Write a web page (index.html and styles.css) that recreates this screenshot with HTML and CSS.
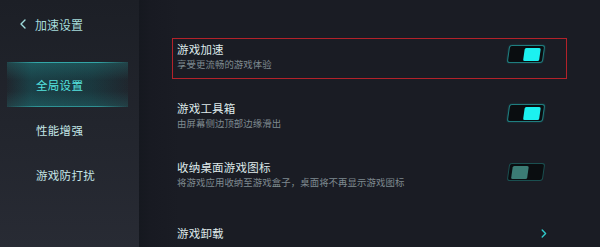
FILE: index.html
```html
<!DOCTYPE html>
<html lang="zh">
<head>
<meta charset="utf-8">
<link rel="stylesheet" href="styles.css">
</head>
<body>
<div class="app">
  <aside class="sidebar">
    <div class="back">
      <svg class="back-icon" width="6" height="10" viewBox="0 0 6 10"><path d="M5 1 L1 5 L5 9" fill="none" stroke="#9fdcdc" stroke-width="1.4" stroke-linecap="round" stroke-linejoin="round"/></svg>
      <span>加速设置</span>
    </div>
    <nav class="nav">
      <div class="nav-item active"><span>全局设置</span></div>
      <div class="nav-item"><span>性能增强</span></div>
      <div class="nav-item"><span>游戏防打扰</span></div>
    </nav>
  </aside>
  <main class="main">
    <div class="row highlighted">
      <div class="texts">
        <div class="title">游戏加速</div>
        <div class="sub">享受更流畅的游戏体验</div>
      </div>
      <div class="toggle on"><div class="knob"></div></div>
    </div>
    <div class="row">
      <div class="texts">
        <div class="title">游戏工具箱</div>
        <div class="sub">由屏幕侧边顶部边缘滑出</div>
      </div>
      <div class="toggle on"><div class="knob"></div></div>
    </div>
    <div class="row">
      <div class="texts">
        <div class="title">收纳桌面游戏图标</div>
        <div class="sub">将游戏应用收纳至游戏盒子，桌面将不再显示游戏图标</div>
      </div>
      <div class="toggle off"><div class="knob"></div></div>
    </div>
    <div class="row link">
      <div class="title">游戏卸载</div>
      <svg class="chev" width="6" height="9" viewBox="0 0 6 9"><path d="M1.2 1 L4.6 4.5 L1.2 8" fill="none" stroke="#2fc9c9" stroke-width="1.4" stroke-linecap="round" stroke-linejoin="round"/></svg>
    </div>
  </main>
</div>
</body>
</html>
```
FILE: styles.css
```css
* { box-sizing: border-box; }
html, body { margin: 0; padding: 0; }
body {
  width: 600px;
  height: 247px;
  overflow: hidden;
  background: #191b23;
  font-family: "Noto Sans CJK SC", "Noto Sans", sans-serif;
}
.app {
  display: flex;
  height: 247px;
}
.sidebar {
  width: 139px;
  flex: none;
  background: linear-gradient(180deg, #1c1f26 0%, #22252d 50%, #282b34 100%);
  display: flex;
  flex-direction: column;
}
.back {
  display: flex;
  align-items: center;
  gap: 9px;
  padding: 15px 0 0 20px;
  height: 33px;
  color: #a6dcdc;
  font-size: 12px;
  line-height: 17px;
}
.back-icon { display: block; }
.nav {
  display: flex;
  flex-direction: column;
  margin-top: 29px;
}
.nav-item {
  height: 45px;
  display: flex;
  align-items: center;
  padding-left: 36px;
  color: #c4e6e6;
  font-size: 11.5px;
  letter-spacing: 0.3px;
}
.nav-item.active {
  margin: 0 11px 0 7px;
  padding-left: 29px;
  color: #56e4e0;
  background:
    linear-gradient(90deg, rgba(0,0,0,0) 0%, rgba(60,200,200,0.7) 25%, rgba(60,200,200,0.7) 75%, rgba(0,0,0,0) 100%) top / 100% 1px no-repeat,
    linear-gradient(90deg, rgba(0,0,0,0) 0%, rgba(60,200,200,0.55) 25%, rgba(60,200,200,0.55) 75%, rgba(0,0,0,0) 100%) bottom / 100% 1px no-repeat,
    linear-gradient(180deg, rgba(40,160,160,0.28) 0%, rgba(20,100,105,0.05) 40%, rgba(20,100,105,0.05) 65%, rgba(40,160,160,0.22) 100%),
    linear-gradient(90deg, rgba(20,40,45,0) 0%, rgba(20,95,100,0.45) 20%, rgba(18,80,85,0.4) 70%, rgba(20,40,45,0) 100%);
}
.main {
  flex: 1;
  padding: 38px 0 0 33px;
  background: linear-gradient(90deg, #15181f 0px, #181a22 12px, #1a1c24 40px);
}
.row {
  width: 395px;
  height: 41px;
  margin-bottom: 18px;
  display: flex;
  justify-content: space-between;
  align-items: flex-start;
  padding: 1px 22px 0 4px;
  border: 1px solid transparent;
}
.row.highlighted { border-color: #b3222a; }
.texts {
  display: flex;
  flex-direction: column;
  padding-top: 2px;
}
.title {
  color: #dfeaeb;
  font-size: 11.5px;
  line-height: 15px;
  letter-spacing: 0.2px;
}
.sub {
  color: #7f8a90;
  font-size: 9.4px;
  line-height: 15px;
  letter-spacing: 0.1px;
}
.toggle {
  margin-top: 5px;
  width: 36px;
  height: 18px;
  border: 1px solid #1f7e80;
  border-radius: 3px;
  background: #0a0d10;
  transform: skewX(-8deg);
  display: flex;
  align-items: center;
  padding: 0 3px;
  box-shadow: 0 0 2px rgba(40,180,180,0.35);
}
.toggle.on { justify-content: flex-end; }
.toggle.off { justify-content: flex-start; border-color: #1a4f50; box-shadow: none; }
.knob {
  width: 16px;
  height: 13px;
  border-radius: 1.5px;
}
.toggle.on .knob { background: #1cf1f0; }
.toggle.off .knob { background: #3b7b74; }
.row.link {
  height: 36px;
  align-items: center;
  padding-right: 19px;
}
.chev { display: block; }
```
